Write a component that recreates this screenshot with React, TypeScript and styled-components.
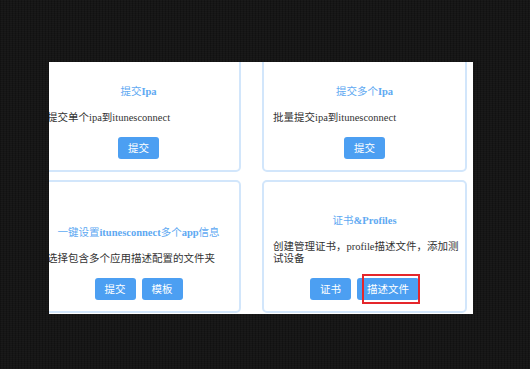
import React from 'react';
import styled, { createGlobalStyle } from 'styled-components';

const GlobalStyle = createGlobalStyle`
  html, body {
    margin: 0;
    padding: 0;
    background: #151515;
  }
  body {
    font-family: 'Liberation Serif', 'Noto Sans CJK SC', serif;
  }
`;

const Stage = styled.div`
  width: 530px;
  height: 369px;
  box-sizing: border-box;
  padding: 62px 0 0 49px;
  background-color: #161616;
  background-image:
    repeating-linear-gradient(90deg, rgba(0, 0, 0, 0.22) 0 1px, transparent 1px 3px),
    repeating-linear-gradient(0deg, rgba(255, 255, 255, 0.015) 0 1px, transparent 1px 2px);
`;

const Panel = styled.div`
  width: 424px;
  height: 252px;
  background: #fff;
  overflow: hidden;
`;

const Grid = styled.div`
  display: grid;
  grid-template-columns: 205px 205px;
  grid-auto-rows: 133px;
  column-gap: 21px;
  row-gap: 8px;
  margin: -23px 0 0 -13px;
`;

const Card = styled.div`
  box-sizing: border-box;
  display: flex;
  flex-direction: column;
  justify-content: flex-end;
  padding: 0 8px 11px;
  border: 2px solid #d2e6fb;
  border-radius: 5px;
`;

const Title = styled.div`
  margin-bottom: 13px;
  font-size: 10.5px;
  line-height: 14px;
  color: #5ea9f2;
  text-align: center;
  white-space: nowrap;
`;

const Latin = styled.span`
  font-weight: bold;
`;

const Desc = styled.div`
  margin: 0 -8px 13px 1px;
  font-size: 10.5px;
  line-height: 12px;
  color: #333;
`;

const Actions = styled.div`
  display: flex;
  justify-content: center;
  gap: 6px;
`;

const Button = styled.button`
  height: 22px;
  padding: 0 10px;
  border: 0;
  border-radius: 3px;
  background: #4c9ff2;
  color: #fff;
  font-family: 'Noto Sans CJK SC', sans-serif;
  font-size: 10.5px;
  line-height: 22px;
  cursor: pointer;
`;

const Marked = styled.div`
  position: relative;
  display: flex;
`;

const Highlight = styled.div`
  position: absolute;
  left: 5px;
  top: -4px;
  width: 58px;
  height: 30px;
  box-sizing: border-box;
  border: 2px solid #e5262b;
  pointer-events: none;
`;

const App = () => (
  <Stage>
    <GlobalStyle />
    <Panel>
      <Grid>
        <Card>
          <Title>
            提交<Latin>Ipa</Latin>
          </Title>
          <Desc>提交单个ipa到itunesconnect</Desc>
          <Actions>
            <Button>提交</Button>
          </Actions>
        </Card>
        <Card>
          <Title>
            提交多个<Latin>Ipa</Latin>
          </Title>
          <Desc>批量提交ipa到itunesconnect</Desc>
          <Actions>
            <Button>提交</Button>
          </Actions>
        </Card>
        <Card>
          <Title>
            一键设置<Latin>itunesconnect</Latin>多个<Latin>app</Latin>信息
          </Title>
          <Desc>选择包含多个应用描述配置的文件夹</Desc>
          <Actions>
            <Button>提交</Button>
            <Button>模板</Button>
          </Actions>
        </Card>
        <Card>
          <Title>
            证书<Latin>&amp;Profiles</Latin>
          </Title>
          <Desc>创建管理证书，profile描述文件，添加测试设备</Desc>
          <Actions>
            <Button>证书</Button>
            <Marked>
              <Button>描述文件</Button>
              <Highlight />
            </Marked>
          </Actions>
        </Card>
      </Grid>
    </Panel>
  </Stage>
);

export default App;
